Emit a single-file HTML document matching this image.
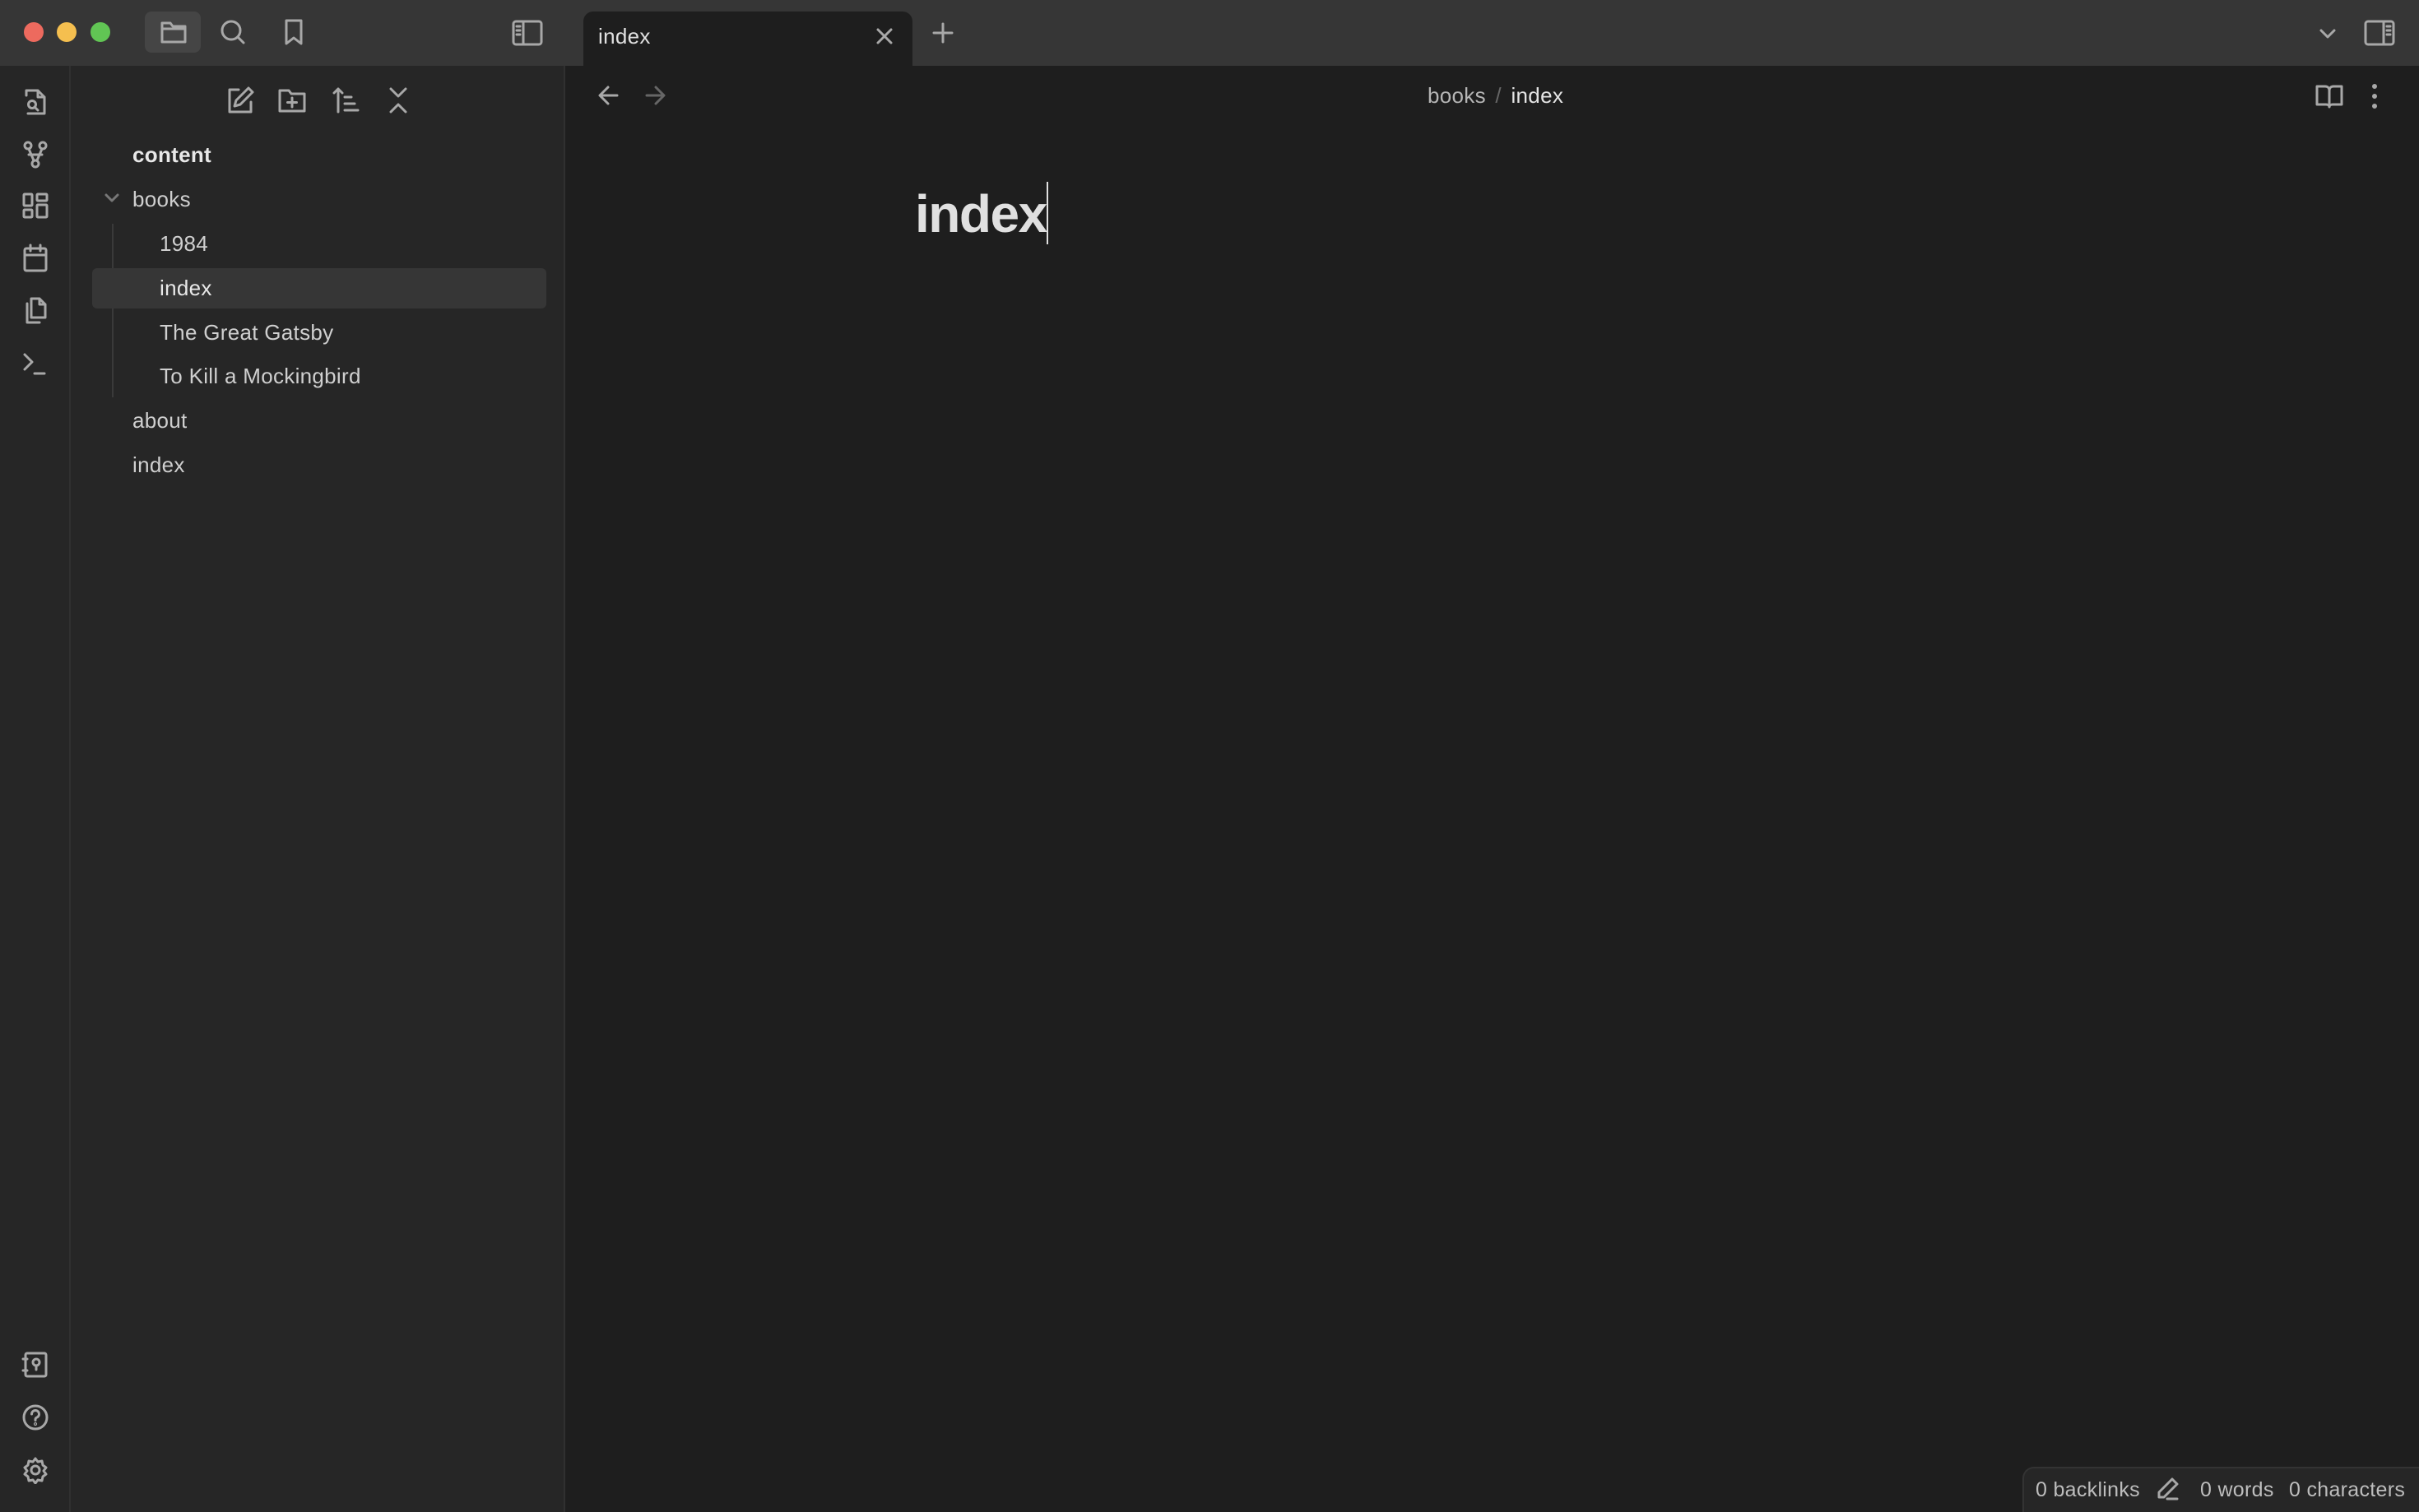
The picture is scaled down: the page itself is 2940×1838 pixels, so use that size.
<!DOCTYPE html>
<html style="overflow:hidden;height:1838px"><head><meta charset="utf-8"><style>
*{margin:0;padding:0;box-sizing:border-box}
body{width:2940px;height:1838px;background:#1e1e1e;font-family:"Liberation Sans",sans-serif;position:relative;overflow:hidden;color:#dadada}
.a{position:absolute}
svg{position:absolute;fill:none;stroke:#a8a8a8;stroke-width:3;stroke-linecap:round;stroke-linejoin:round}
.t{position:absolute;font-size:26px;color:#cfcfcf;line-height:30px;white-space:nowrap;letter-spacing:0.3px}
</style></head><body>
<div class="a" style="left:0;top:0;width:2940px;height:80px;background:#363636"></div>
<div class="a" style="left:0;top:80px;width:86px;height:1758px;background:#262626;border-right:2px solid #303030"></div>
<div class="a" style="left:86px;top:80px;width:601px;height:1758px;background:#262626;border-right:2px solid #303030"></div>
<div class="a" style="left:29px;top:27px;width:24px;height:24px;border-radius:50%;background:#ed6a5e"></div>
<div class="a" style="left:69px;top:27px;width:24px;height:24px;border-radius:50%;background:#f5bf4f"></div>
<div class="a" style="left:110px;top:27px;width:24px;height:24px;border-radius:50%;background:#61c554"></div>
<div class="a" style="left:176px;top:14px;width:68px;height:50px;border-radius:8px;background:#454545"></div>
<svg style="left:194px;top:24px" width="34" height="30" viewBox="0 0 34 30"><path d="M3 4h10l3 4h15v19H3z M3 11h28"/></svg>
<svg style="left:266px;top:22px" width="34" height="34" viewBox="0 0 34 34"><circle cx="15" cy="15" r="11"/><path d="M23 23l7 7"/></svg>
<svg style="left:344px;top:22px" width="26" height="34" viewBox="0 0 26 34"><path d="M4 3h18v28l-9-7-9 7z"/></svg>
<svg style="left:622px;top:24px" width="38" height="32" viewBox="0 0 38 32"><rect x="2" y="2" width="34" height="28" rx="3"/><path d="M14 2v28 M6 8h4 M6 13h4 M6 18h4"/></svg>
<div class="a" style="left:709px;top:14px;width:400px;height:66px;background:#1e1e1e;border-radius:12px 12px 0 0"></div>
<div class="t" style="left:727px;top:29px;color:#e0e0e0">index</div>
<svg style="left:1064px;top:33px" width="22" height="22" viewBox="0 0 22 22"><path d="M3 3l16 16M19 3L3 19"/></svg>
<svg style="left:1133px;top:27px" width="26" height="26" viewBox="0 0 26 26"><path d="M13 2v22M2 13h22"/></svg>
<svg style="left:2818px;top:33px" width="22" height="16" viewBox="0 0 22 16"><path d="M3 4l8 8 8-8"/></svg>
<svg style="left:2873px;top:24px" width="38" height="32" viewBox="0 0 38 32"><rect x="2" y="2" width="34" height="28" rx="3"/><path d="M24 2v28 M28 8h4 M28 13h4 M28 18h4"/></svg>
<svg style="left:26px;top:104px" width="34" height="38" viewBox="0 0 34 38"><path d="M6 6v0h14l8 8v20H8 M6 6v6 M20 6v8h8"/><circle cx="13" cy="23" r="4.5"/><path d="M16 26l4 4"/></svg>
<svg style="left:26px;top:170px" width="34" height="36" viewBox="0 0 34 36"><circle cx="8" cy="7" r="4"/><circle cx="26" cy="7" r="4"/><circle cx="17" cy="29" r="4"/><path d="M9 11l6 14 M25 11l-6 14 M9 18h16"/></svg>
<svg style="left:26px;top:233px" width="34" height="34" viewBox="0 0 34 34"><rect x="3" y="3" width="10" height="14" rx="1"/><rect x="19" y="3" width="12" height="8" rx="1"/><rect x="3" y="22" width="10" height="9" rx="1"/><rect x="19" y="16" width="12" height="15" rx="1"/></svg>
<svg style="left:26px;top:296px" width="34" height="36" viewBox="0 0 34 36"><rect x="4" y="6" width="26" height="27" rx="2"/><path d="M4 14h26 M11 2v7 M23 2v7"/></svg>
<svg style="left:26px;top:360px" width="34" height="36" viewBox="0 0 34 36"><path d="M12 3h10l7 7v16H12z M22 3v7h7 M7 9v23h15"/></svg>
<svg style="left:26px;top:426px" width="34" height="32" viewBox="0 0 34 32"><path d="M4 5l9 9-9 9 M16 28h12"/></svg>
<svg style="left:26px;top:1642px" width="34" height="34" viewBox="0 0 34 34"><rect x="5" y="3" width="25" height="28" rx="2"/><circle cx="18" cy="14" r="4"/><path d="M18 18v5 M2 10h5 M2 24h5"/></svg>
<svg style="left:26px;top:1706px" width="34" height="34" viewBox="0 0 34 34"><circle cx="17" cy="17" r="14"/><path d="M12.5 13a4.5 4.5 0 1 1 6 4.2c-1 .5-1.5 1.3-1.5 2.3v1"/><circle cx="17" cy="25" r=".6"/></svg>
<svg style="left:26px;top:1770px" width="34" height="34" viewBox="0 0 34 34"><circle cx="17" cy="17" r="5"/><path d="M17 3l3 4 5-1 1 5 4 3-3 4 3 4-4 3-1 5-5-1-3 4-3-4-5 1-1-5-4-3 3-4-3-4 4-3 1-5 5 1z"/></svg>
<svg style="left:274px;top:104px" width="36" height="36" viewBox="0 0 36 36"><path d="M16 5H5v27h26V20 M28 3l5 5-15 15-7 2 2-7z"/></svg>
<svg style="left:337px;top:106px" width="36" height="32" viewBox="0 0 36 32"><path d="M3 4h11l3 4h16v21H3z M18 13v11 M12.5 18.5h11"/></svg>
<svg style="left:403px;top:104px" width="36" height="36" viewBox="0 0 36 36"><path d="M8 32V4 M3 9l5-5 5 5 M16 14h8 M16 22h12 M16 30h16"/></svg>
<svg style="left:470px;top:104px" width="28" height="36" viewBox="0 0 28 36"><path d="M5 4l9 9 9-9 M5 32l9-9 9 9"/></svg>
<div class="t" style="left:161px;top:173px;font-weight:bold;color:#e8e8e8">content</div>
<svg style="left:125px;top:233px" width="22" height="16" viewBox="0 0 22 16"><path d="M4 4l7 7 7-7" stroke="#777"/></svg>
<div class="t" style="left:161px;top:227px">books</div>
<div class="a" style="left:136px;top:272px;width:2px;height:211px;background:#3a3a3a"></div>
<div class="t" style="left:194px;top:281px">1984</div>
<div class="a" style="left:112px;top:326px;width:552px;height:49px;background:#363636;border-radius:6px"></div>
<div class="t" style="left:194px;top:335px;color:#e8e8e8">index</div>
<div class="t" style="left:194px;top:389px">The Great Gatsby</div>
<div class="t" style="left:194px;top:442px">To Kill a Mockingbird</div>
<div class="t" style="left:161px;top:496px">about</div>
<div class="t" style="left:161px;top:550px">index</div>
<svg style="left:726px;top:103px" width="28" height="26" viewBox="0 0 28 26"><path d="M24 13H4 M13 3L3 13l10 10"/></svg>
<svg style="left:782px;top:103px" width="28" height="26" viewBox="0 0 28 26"><path d="M4 13h20 M15 3l10 10-10 10" stroke="#666"/></svg>
<div class="t" style="left:1735px;top:101px;color:#b5b5b5">books <span style="color:#666;margin:0 4px">/</span> <span style="color:#e4e4e4">index</span></div>
<svg style="left:2813px;top:101px" width="36" height="32" viewBox="0 0 36 32"><path d="M3 4h10c3 0 5 2 5 5v20c0-2-2-3-4-3H3z M33 4H23c-3 0-5 2-5 5v20c0-2 2-3 4-3h11z"/></svg>
<svg style="left:2876px;top:100px" width="20" height="34" viewBox="0 0 20 34"><circle cx="10" cy="5" r="1.5"/><circle cx="10" cy="17" r="1.5"/><circle cx="10" cy="29" r="1.5"/></svg>
<div class="a" style="left:1112px;top:222px;font-size:64px;font-weight:bold;line-height:76px;color:#e0e0e0;letter-spacing:-1.5px">index</div>
<div class="a" style="left:1272px;top:221px;width:2px;height:76px;background:#e0e0e0"></div>
<div class="a" style="left:2458px;top:1783px;width:482px;height:55px;background:#262626;border:2px solid #333;border-bottom:none;border-right:none;border-radius:14px 0 0 0"></div>
<div class="t" style="left:2474px;top:1796px;font-size:25px;color:#bdbdbd">0 backlinks</div>
<svg style="left:2620px;top:1795px" width="30" height="30" viewBox="0 0 30 30"><path d="M20 3l6 6L10 25H4v-6z M14 27h12"/></svg>
<div class="t" style="left:2674px;top:1796px;font-size:25px;color:#bdbdbd">0 words</div>
<div class="t" style="left:2782px;top:1796px;font-size:25px;color:#bdbdbd">0 characters</div>
</body></html>
